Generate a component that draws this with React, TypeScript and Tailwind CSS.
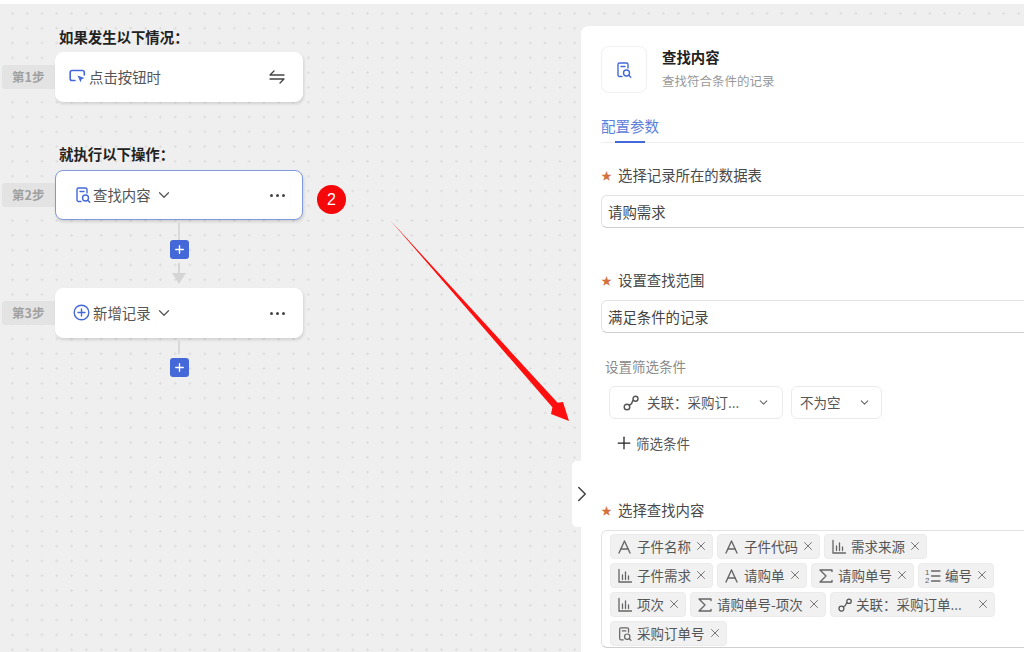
import type { ReactNode } from 'react'
import { ChevronDown, ChevronRight, Plus, X } from 'lucide-react'

const BLUE = '#4468d8'

function DocSearchIcon({ size = 18, color = BLUE }: { size?: number; color?: string }) {
  return (
    <svg width={size} height={size} viewBox="0 0 18 18" fill="none" stroke={color} strokeWidth="1.4" strokeLinecap="round" strokeLinejoin="round">
      <path d="M7 15.5H4.5a1.5 1.5 0 0 1-1.5-1.5V3.5A1.5 1.5 0 0 1 4.5 2h7A1.5 1.5 0 0 1 13 3.5V7" />
      <path d="M6 5.5h4" />
      <circle cx="11.5" cy="12" r="3" />
      <path d="M13.8 14.3l1.9 1.9" />
    </svg>
  )
}

function LinkIcon({ size = 18 }: { size?: number }) {
  return (
    <svg width={size} height={size} viewBox="0 0 18 18" fill="none" stroke="#555" strokeWidth="1.4" strokeLinecap="round">
      <circle cx="5" cy="13" r="2.8" />
      <circle cx="13.5" cy="4.8" r="2.5" />
      <path d="M7 11c2-.5 3-1.5 3.3-3.2.1-.7.4-1.2 1-1.5" />
    </svg>
  )
}

function LetterIcon() {
  return (
    <svg width="18" height="18" viewBox="0 0 18 18" fill="none" stroke="#666" strokeWidth="1.4" strokeLinecap="round" strokeLinejoin="round">
      <path d="M2 15L7.500 3l5.500 12" />
      <path d="M4 11h7" />
    </svg>
  )
}

function BarsIcon() {
  return (
    <svg width="16" height="16" viewBox="0 0 16 16" fill="none" stroke="#666" strokeWidth="1.3" strokeLinecap="round">
      <path d="M2 1.500V14h12.500" />
      <path d="M5.500 7v4.500M8.500 4v7.500M11.500 8v3.500" />
    </svg>
  )
}

function SigmaIcon() {
  return (
    <svg width="18" height="18" viewBox="0 0 18 18" fill="none" stroke="#666" strokeWidth="1.4" strokeLinecap="round" strokeLinejoin="round">
      <path d="M14 4.500V3H2l6 6-6 6h12v-1.500" />
    </svg>
  )
}

function NumberedIcon() {
  return (
    <svg width="18" height="16" viewBox="0 0 18 16" fill="none" stroke="#666" strokeWidth="1.3" strokeLinecap="round">
      <text x="0" y="7" fontSize="8" fill="#666" stroke="none" fontFamily="Liberation Sans, sans-serif">1</text>
      <text x="0" y="15" fontSize="8" fill="#666" stroke="none" fontFamily="Liberation Sans, sans-serif">2</text>
      <path d="M6.500 3h8.500M6.500 8h8.500M6.500 13h8.500" />
    </svg>
  )
}

function CursorIcon() {
  return (
    <svg width="17" height="17" viewBox="0 0 17 17" fill="none">
      <path d="M6 12.500H3a1.800 1.800 0 0 1-1.800-1.800V4.300A1.800 1.800 0 0 1 3 2.500h10.500a1.800 1.800 0 0 1 1.800 1.800V7" stroke={BLUE} strokeWidth="1.600" strokeLinecap="round" />
      <path d="M8.500 7.500l7 2.500-2.800 1.200-1.200 3z" fill={BLUE} />
    </svg>
  )
}

function SwapIcon() {
  return (
    <svg width="16" height="14" viewBox="0 0 16 14" fill="none" stroke="#444" strokeWidth="1.300" strokeLinecap="round" strokeLinejoin="round">
      <path d="M1 5h14M1 5l4-4" />
      <path d="M15 9H1M15 9l-4 4" />
    </svg>
  )
}

function Dots() {
  return (
    <div className="flex gap-[3px]">
      <span className="w-[3px] h-[3px] rounded-full bg-[#444]" />
      <span className="w-[3px] h-[3px] rounded-full bg-[#444]" />
      <span className="w-[3px] h-[3px] rounded-full bg-[#444]" />
    </div>
  )
}

function AddButton() {
  return (
    <div className="w-[19px] h-[19px] rounded-[3px] bg-[#4468d8] flex items-center justify-center">
      <Plus size={13} strokeWidth={2.500} color="#fff" />
    </div>
  )
}

function StepRow({ label, active, children }: { label: string; active?: boolean; children: ReactNode }) {
  return (
    <div className="flex items-center pl-[2px]">
      <div className="w-[54px] h-[24px] rounded-l-[3px] bg-[#e3e3e3] text-[12.500px] font-bold text-[#a0a0a0] flex items-center pl-[10px]">
        {label}
      </div>
      <div
        className={`-ml-[1px] w-[248px] h-[50px] rounded-[8px] bg-white flex items-center justify-between pr-[17px] border shadow-[1px_2px_3px_rgba(0,0,0,0.12)] ${active ? 'border-[#7f97dd]' : 'border-white'}`}
      >
        {children}
      </div>
    </div>
  )
}

function Required({ children }: { children: ReactNode }) {
  return (
    <div className="flex items-center text-[14.400px] leading-[20px] text-[#4a4a4a]">
      <span className="w-[17px] text-[#d4703a] text-[11px]">★</span>
      {children}
    </div>
  )
}

function Field({ value }: { value: string }) {
  return (
    <div className="-mr-3 h-[33px] rounded-l-[6px] border border-[#e2e2e2] border-b-[#cfcfcf] flex items-center pl-[6px] text-[14.400px] text-[#444]">
      {value}
    </div>
  )
}

function Tag({ icon, label, w, gap = 'gap-[2px]' }: { icon: ReactNode; label: string; w: number; gap?: string }) {
  return (
    <div
      className={`h-[25px] rounded-[4px] bg-[#f1f1f1] border border-[#ebebeb] flex items-center pl-[6px] ${gap} text-[13.500px] text-[#555] relative whitespace-nowrap`}
      style={{ width: w }}
    >
      {icon}
      <span>{label}</span>
      <X size={14} strokeWidth={1.500} color="#666" className="absolute right-[4px] top-[4px]" />
    </div>
  )
}

export default function App() {
  return (
    <div className="w-[1024px] h-[652px] overflow-hidden bg-white pt-[4px] font-['Noto_Sans_CJK_SC','Noto_Sans',sans-serif]">
      <div className="relative h-[648px] flex bg-[#efefef] bg-[radial-gradient(circle,#dddddd_1px,transparent_1.200px)] bg-[size:14.800px_14.800px] bg-[position:5px_2px]">
        {/* flow canvas */}
        <div className="w-[581px] shrink-0 pt-[22px]">
          <div className="pl-[59px] text-[14.400px] leading-[22px] font-bold text-[#222]">如果发生以下情况：</div>
          <div className="mt-[4px]">
            <StepRow label="第1步">
              <div className="flex items-center gap-[3px] pl-[13px] text-[14.400px] text-[#555]">
                <CursorIcon />
                点击按钮时
              </div>
              <SwapIcon />
            </StepRow>
          </div>

          <div className="pl-[59px] mt-[41px] text-[14.400px] leading-[22px] font-bold text-[#222]">就执行以下操作：</div>
          <div className="mt-[5px] relative">
            <StepRow label="第2步" active>
              <div className="flex items-center gap-[1px] pl-[18px] text-[14.400px] text-[#555]">
                <DocSearchIcon />
                查找内容
                <ChevronDown size={18} strokeWidth={1.600} color="#555" className="ml-[3px]" />
              </div>
              <Dots />
            </StepRow>
            <div className="absolute left-[317px] top-[15px] w-[29px] h-[29px] rounded-full bg-[#f5080a] text-white text-[16px] flex items-center justify-center font-['Liberation_Sans',sans-serif]">
              2
            </div>
          </div>

          <div className="w-[248px] ml-[55px] flex flex-col items-center">
            <div className="w-[2px] h-[17px] mt-[3px] bg-[#d9d9d9]" />
            <AddButton />
            <div className="w-[2px] h-[10px] mt-[4px] bg-[#d5d5d5]" />
            <div className="w-0 h-0 border-l-[7px] border-r-[7px] border-t-[11px] border-l-transparent border-r-transparent border-t-[#d5d5d5]" />
          </div>

          <div className="mt-[4px]">
            <StepRow label="第3步">
              <div className="flex items-center gap-[3px] pl-[17px] text-[14.400px] text-[#555]">
                <svg width="17" height="17" viewBox="0 0 17 17" fill="none" stroke={BLUE} strokeWidth="1.400" strokeLinecap="round">
                  <circle cx="8.500" cy="8.500" r="7.300" />
                  <path d="M8.500 5v7M5 8.500h7" />
                </svg>
                新增记录
                <ChevronDown size={18} strokeWidth={1.600} color="#555" className="ml-[1px]" />
              </div>
              <Dots />
            </StepRow>
          </div>

          <div className="w-[248px] ml-[55px] flex flex-col items-center">
            <div className="w-[2px] h-[13px] mt-[3px] bg-[#d9d9d9]" />
            <div className="mt-[4px]"><AddButton /></div>
          </div>
        </div>

        {/* config panel */}
        <div className="flex-1 mt-[22px] bg-white rounded-tl-[8px] pl-[20px] pt-[20px] overflow-hidden">
          <div className="flex">
            <div className="w-[46px] h-[47px] rounded-[8px] border border-[#f0f0f0] flex items-center justify-center">
              <DocSearchIcon />
            </div>
            <div className="ml-[15px] -mt-[1px]">
              <div className="text-[14.400px] leading-[24px] font-bold text-[#222]">查找内容</div>
              <div className="text-[12.500px] leading-[20px] mt-[2px] text-[#999]">查找符合条件的记录</div>
            </div>
          </div>

          <div className="mt-[13px] border-b border-[#eeeeee] h-[37px] relative">
            <div className="text-[14.500px] leading-[22px] pt-[9px] text-[#5d7ed9]">配置参数</div>
            <div className="absolute left-[14px] bottom-[-1px] w-[30px] h-[2px] bg-[#4468d8]" />
          </div>

          <div className="mt-[22px]"><Required>选择记录所在的数据表</Required></div>
          <div className="mt-[10px]"><Field value="请购需求" /></div>

          <div className="mt-[42px]"><Required>设置查找范围</Required></div>
          <div className="mt-[10px]"><Field value="满足条件的记录" /></div>

          <div className="mt-[23px] pl-[4px] text-[13.500px] leading-[20px] text-[#8a8a8a]">设置筛选条件</div>
          <div className="mt-[10px] pl-[8px] flex gap-[8px]">
            <div className="w-[174px] h-[33px] rounded-[6px] border border-[#ebebeb] flex items-center pl-[12px] pr-[12px] text-[13.500px] text-[#555]">
              <LinkIcon />
              <span className="ml-[7px]">关联：采购订...</span>
              <ChevronDown size={13} color="#666" className="ml-auto" />
            </div>
            <div className="w-[91px] h-[33px] rounded-[6px] border border-[#ebebeb] flex items-center pl-[8px] pr-[10px] text-[13.500px] text-[#555]">
              不为空
              <ChevronDown size={13} color="#666" className="ml-auto" />
            </div>
          </div>
          <div className="mt-[13px] pl-[13px] flex items-center gap-[2px] text-[13.500px] leading-[22px] text-[#555]">
            <Plus size={20} strokeWidth={1.500} color="#222" />
            筛选条件
          </div>

          <div className="mt-[46px]"><Required>选择查找内容</Required></div>
          <div className="mt-[10px] -mr-3 h-[118px] rounded-l-[6px] border border-[#e2e2e2] border-b-[#cfcfcf] pl-[8px] pt-[3px] flex flex-col gap-[4px]">
            <div className="flex gap-[4px]">
              <Tag icon={<LetterIcon />} label="子件名称" w={103} />
              <Tag icon={<LetterIcon />} label="子件代码" w={103} />
              <Tag icon={<BarsIcon />} label="需求来源" w={103} gap="gap-[4px]" />
            </div>
            <div className="flex gap-[4px]">
              <Tag icon={<BarsIcon />} label="子件需求" w={103} gap="gap-[4px]" />
              <Tag icon={<LetterIcon />} label="请购单" w={90} />
              <Tag icon={<SigmaIcon />} label="请购单号" w={103} />
              <Tag icon={<NumberedIcon />} label="编号" w={76} />
            </div>
            <div className="flex gap-[4px]">
              <Tag icon={<BarsIcon />} label="项次" w={76} gap="gap-[4px]" />
              <Tag icon={<SigmaIcon />} label="请购单号-项次" w={136} />
              <Tag icon={<LinkIcon size={16} />} label="关联：采购订单..." w={165} gap="gap-[3px]" />
            </div>
            <div className="flex gap-[4px]">
              <Tag icon={<DocSearchIcon size={16} color="#666" />} label="采购订单号" w={117} gap="gap-[4px]" />
            </div>
          </div>
        </div>

        {/* collapse handle */}
        <div className="absolute left-[572px] top-[457px] w-[14px] h-[66px] rounded-l-[5px] bg-white flex items-center">
          <ChevronRight size={26} strokeWidth={1.400} color="#444" className="-ml-[3px] shrink-0" />
        </div>

        {/* annotation arrow */}
        <svg className="absolute left-[385px] top-[212px]" width="190" height="210" viewBox="0 0 190 210" fill="none">
          <path d="M5 4L172.600 186.700L178 186L184 205L166 198L167.400 191.300z" fill="#ff0f0f" />
        </svg>
      </div>
    </div>
  )
}
